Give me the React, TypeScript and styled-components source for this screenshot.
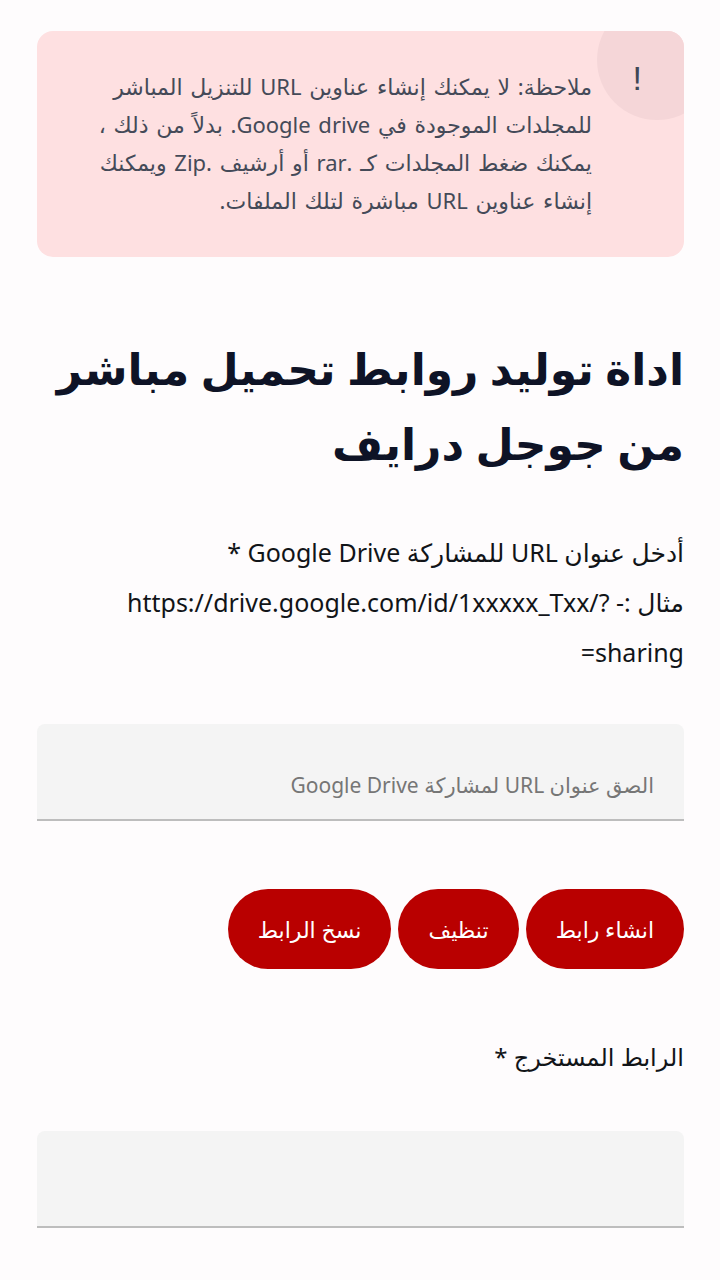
import React from 'react';
import styled, { createGlobalStyle } from 'styled-components';

const GlobalStyle = createGlobalStyle`
  html, body {
    margin: 0;
    padding: 0;
    background: #fefcfd;
  }
  body {
    font-family: "Noto Sans", "DejaVu Sans", sans-serif;
  }
  * {
    box-sizing: border-box;
  }
`;

const Page = styled.div`
  direction: rtl;
  padding: 31px 36px 40px 37px;
  display: flex;
  flex-direction: column;
`;

const Note = styled.div`
  position: relative;
  overflow: hidden;
  background: #fee0e1;
  border-radius: 16px;
  min-height: 226px;
  padding: 36px 92px 30px 30px;
  display: flex;
`;

const NoteCircle = styled.div`
  position: absolute;
  top: -31px;
  left: 560px;
  width: 120px;
  height: 120px;
  border-radius: 50%;
  background: #f5d6d8;
`;

const Bang = styled.span`
  position: absolute;
  top: 28px;
  right: 42px;
  font-size: 34px;
  font-weight: 400;
  color: #3f4756;
  font-family: "Liberation Sans Narrow", "Liberation Sans", sans-serif;
`;

const NoteText = styled.p`
  position: relative;
  margin: 0;
  font-size: 22px;
  word-spacing: 2px;
  line-height: 38px;
  color: #444a58;
  white-space: nowrap;
`;

const Title = styled.h1`
  margin: 74px 0 0;
  font-size: 44px;
  line-height: 75px;
  font-weight: 700;
  color: #0e1326;
`;

const Label = styled.p<{ $top: number; $size?: number }>`
  margin: ${(p) => p.$top}px 0 0;
  font-size: ${(p) => p.$size ?? 25}px;
  line-height: 50px;
  color: #111418;
`;

const Ltr = styled.span`
  direction: ltr;
  unicode-bidi: isolate;
`;

const Field = styled.div<{ $top: number }>`
  margin-top: ${(p) => p.$top}px;
  height: 97px;
  background: #f4f4f4;
  border-radius: 8px 8px 0 0;
  border-bottom: 2px solid #bdbdbd;
  padding: 0 30px 20px;
  display: flex;
  align-items: flex-end;
`;

const Placeholder = styled.span`
  font-size: 21px;
  color: #767676;
`;

const Actions = styled.div`
  margin-top: 68px;
  display: flex;
  gap: 7px;
`;

const Button = styled.button`
  height: 80px;
  padding: 0 30px;
  border: none;
  border-radius: 40px;
  background: #b90000;
  color: #fff;
  font-family: inherit;
  font-size: 22px;
  cursor: pointer;
`;

export default function App() {
  return (
    <>
      <GlobalStyle />
      <Page>
        <Note>
          <NoteCircle />
          <Bang>!</Bang>
          <NoteText>
            ملاحظة: لا يمكنك إنشاء عناوين URL للتنزيل المباشر
            <br />
            للمجلدات الموجودة في Google drive. بدلاً من ذلك ،
            <br />
            يمكنك ضغط المجلدات كـ .rar أو أرشيف .Zip ويمكنك
            <br />
            إنشاء عناوين URL مباشرة لتلك الملفات.
          </NoteText>
        </Note>

        <Title>اداة توليد روابط تحميل مباشر من جوجل درايف</Title>

        <Label $top={46}>
          أدخل عنوان URL للمشاركة Google Drive *
          <br />
          مثال :- <Ltr>https://drive.google.com/id/1xxxxx_Txx/?</Ltr>
          <br />
          <Ltr>=sharing</Ltr>
        </Label>

        <Field $top={47}>
          <Placeholder>الصق عنوان URL لمشاركة Google Drive</Placeholder>
        </Field>

        <Actions>
          <Button>انشاء رابط</Button>
          <Button>تنظيف</Button>
          <Button>نسخ الرابط</Button>
        </Actions>

        <Label $top={63} $size={24}>الرابط المستخرج *</Label>

        <Field $top={49} />
      </Page>
    </>
  );
}
